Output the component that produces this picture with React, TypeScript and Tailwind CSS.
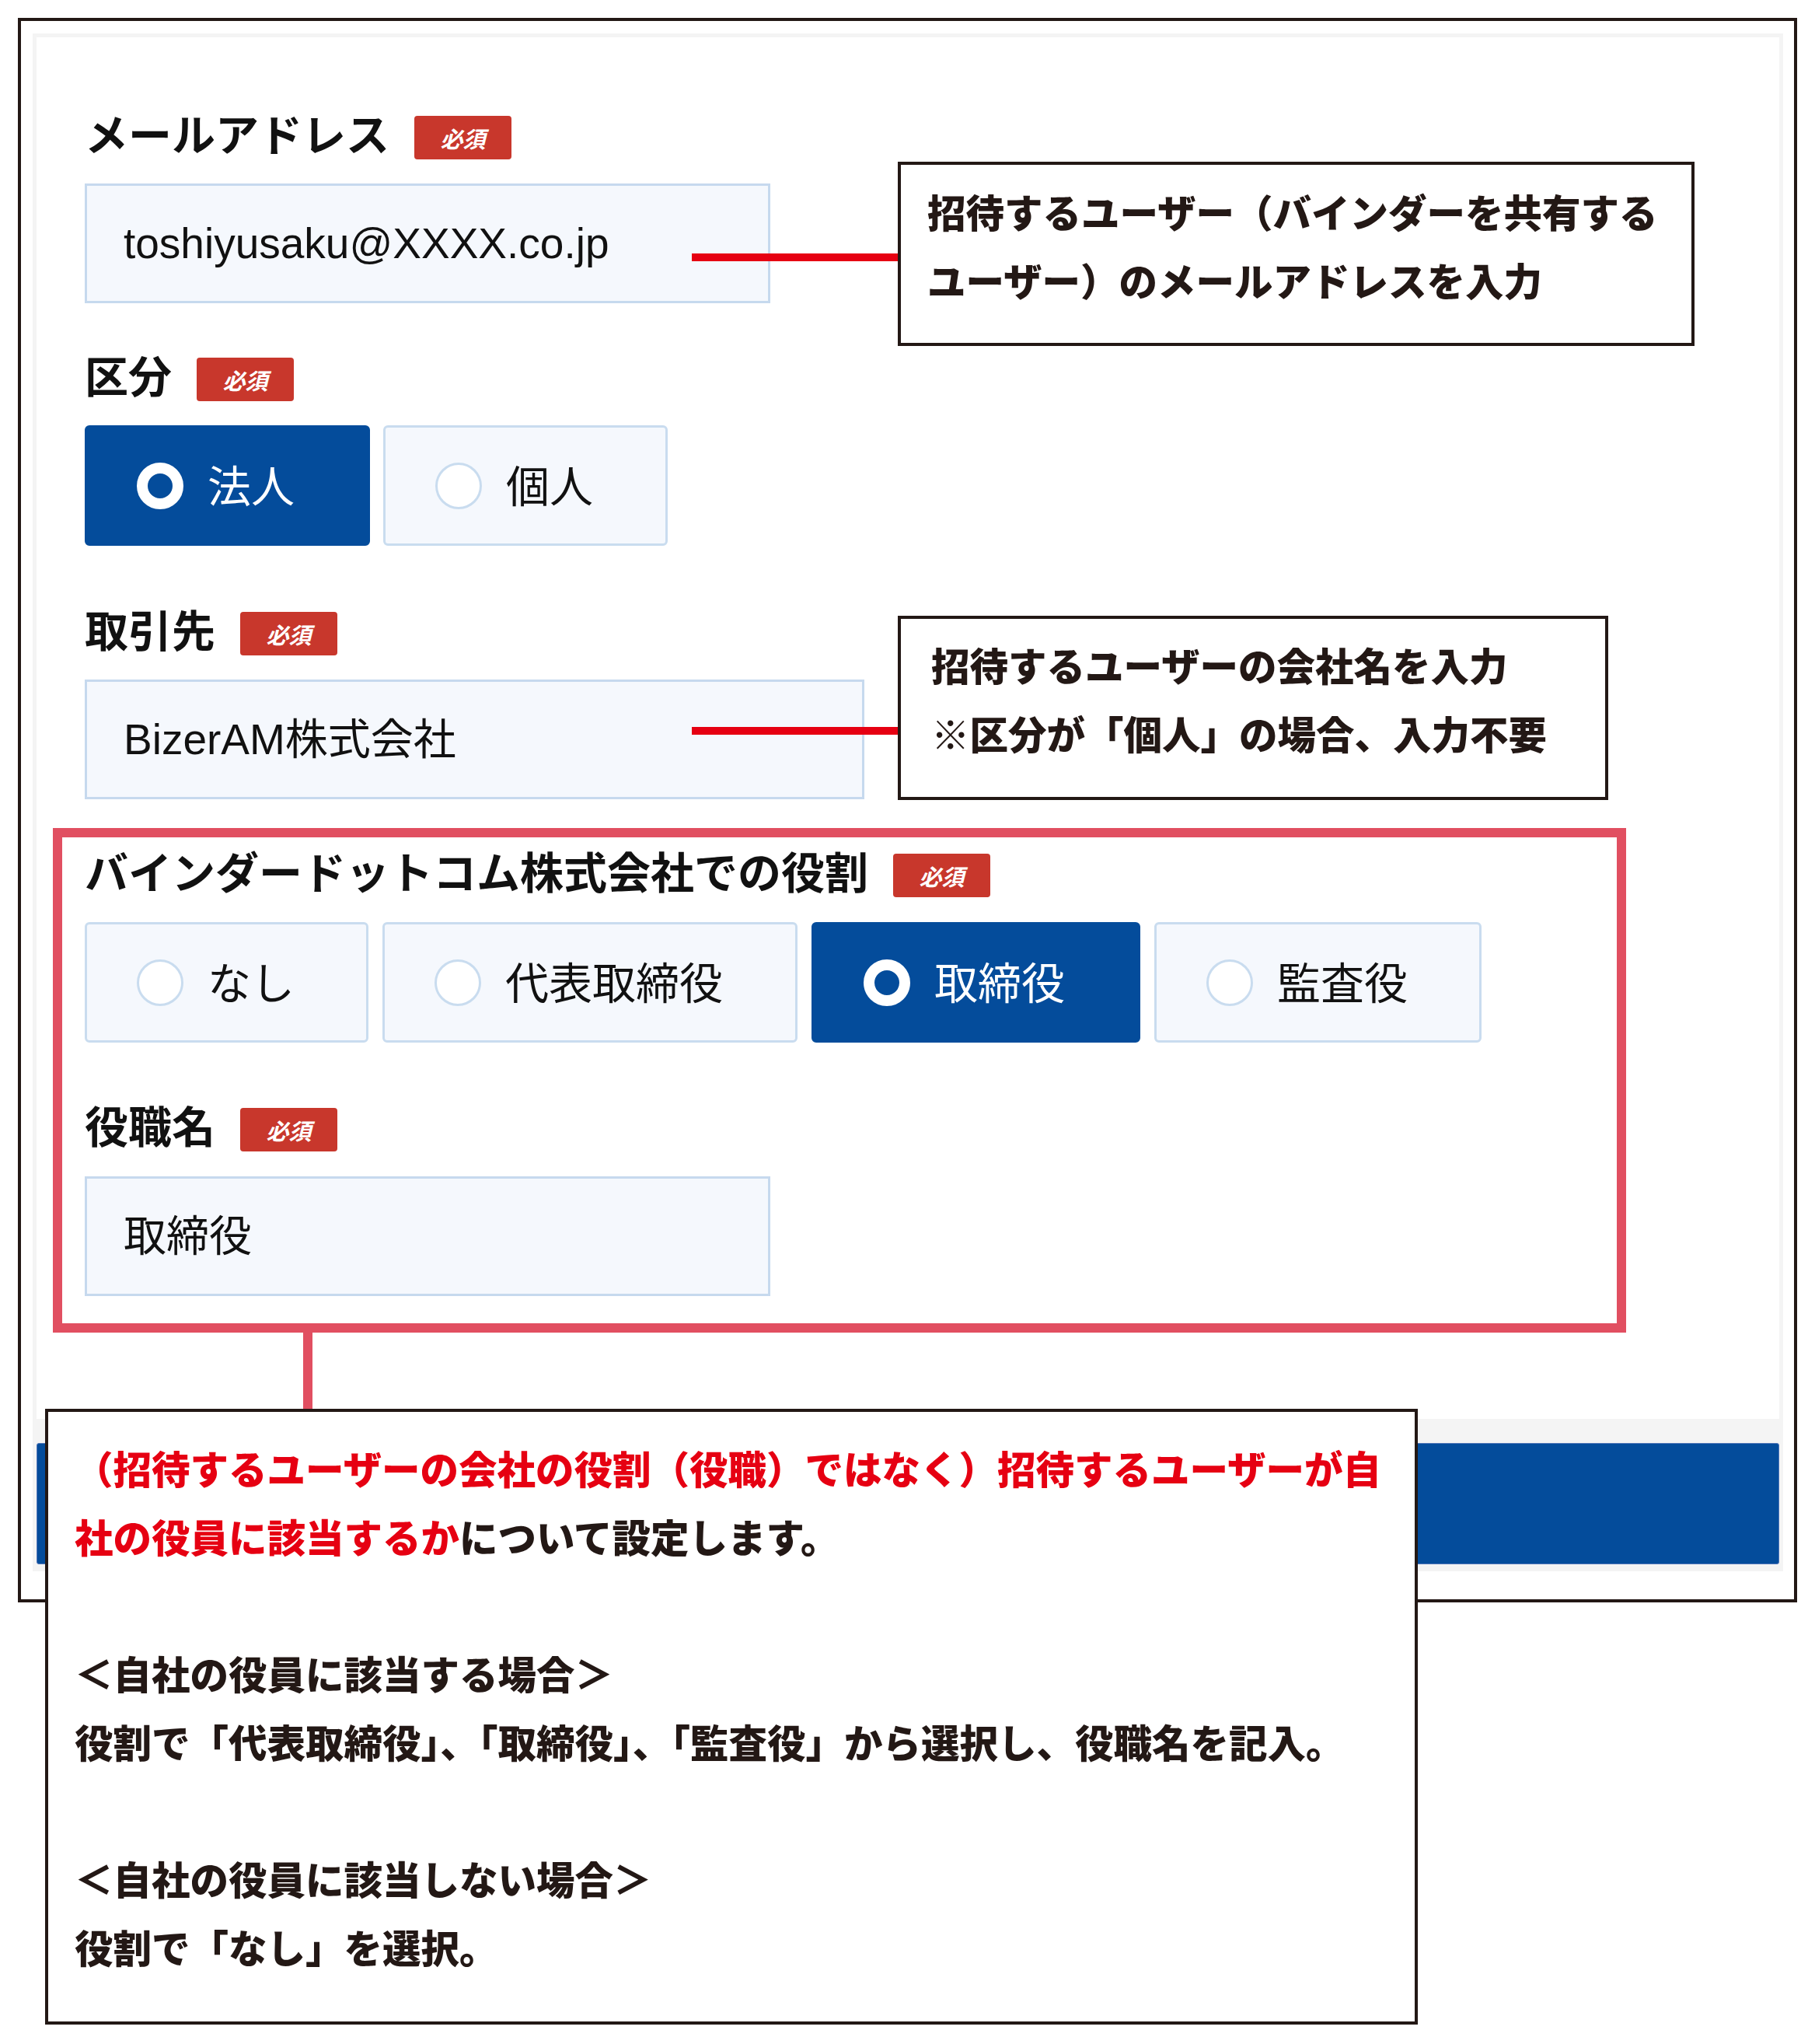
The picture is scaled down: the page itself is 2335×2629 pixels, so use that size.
import React from "react";

const jp = "font-['Noto_Sans_CJK_JP',sans-serif]";
const field = "font-['Liberation_Sans','Noto_Sans_CJK_JP',sans-serif]";

const Badge = () => (
  <span className="flex h-[56px] w-[125px] items-center justify-center rounded-[4px] bg-[#c8372c] text-[29px] font-bold italic leading-none text-white">
    必須
  </span>
);

const FieldLabel = ({ text, className = "" }: { text: string; className?: string }) => (
  <div className={`flex h-[56px] items-center gap-[32px] ${className}`}>
    <span className="relative -top-[7px] text-[56px] font-bold leading-none text-[#111]">{text}</span>
    <Badge />
  </div>
);

const TextBox = ({ value, width, className = "" }: { value: string; width: string; className?: string }) => (
  <div
    className={`flex h-[154px] items-center border-[3px] border-[#c6d9ee] bg-[#f5f8fd] pl-[47px] text-[55px] leading-none text-[#111] ${field} ${width} ${className}`}
  >
    {value}
  </div>
);

const RadioBox = ({ label, checked, width }: { label: string; checked?: boolean; width: string }) => (
  <div
    className={`flex h-[155px] items-center gap-[31px] rounded-[6px] border-[3px] pl-[64px] ${width} ${
      checked ? "border-[#044c9b] bg-[#044c9b] text-white" : "border-[#c9dcef] bg-[#f5f8fd] text-[#111]"
    }`}
  >
    {checked ? (
      <span className="h-[60px] w-[60px] shrink-0 rounded-full border-[14px] border-white bg-[#044c9b]" />
    ) : (
      <span className="h-[60px] w-[60px] shrink-0 rounded-full border-[3px] border-[#c9dcef] bg-white" />
    )}
    <span className="relative -top-[3px] text-[56px] leading-none">{label}</span>
  </div>
);

export default function App() {
  return (
    <div className={`relative h-[2629px] w-[2335px] bg-white px-[23px] pt-[23px] ${jp}`}>
      {/* outer frame */}
      <div className="h-[2038px] border-4 border-[#231815] bg-white pl-[15px] pr-[14px] pt-[16px]">
        {/* screenshot of the form */}
        <div className="bg-[#f4f4f4] px-[5px] pt-[5px] pb-[9px]">
          <div className="bg-white pl-[62px] pt-[101px] pb-[111px]">
            <FieldLabel text="メールアドレス" />
            <TextBox value="toshiyusaku@XXXX.co.jp" width="w-[882px]" className="mt-[31px]" />

            <FieldLabel text="区分" className="mt-[70px]" />
            <div className="mt-[31px] flex gap-[17px]">
              <RadioBox label="法人" checked width="w-[367px]" />
              <RadioBox label="個人" width="w-[366px]" />
            </div>

            <FieldLabel text="取引先" className="mt-[85px]" />
            <TextBox value="BizerAM株式会社" width="w-[1003px]" className="mt-[31px]" />

            {/* highlighted section */}
            <div className="-ml-[41px] mt-[37px] w-[2024px] border-[12px] border-[#e14f61] pl-[29px] pt-[21px] pb-[35px]">
              <FieldLabel text="バインダードットコム株式会社での役割" />
              <div className="mt-[32px] flex gap-[18px]">
                <RadioBox label="なし" width="w-[365px]" />
                <RadioBox label="代表取締役" width="w-[534px]" />
                <RadioBox label="取締役" checked width="w-[423px]" />
                <RadioBox label="監査役" width="w-[421px]" />
              </div>
              <FieldLabel text="役職名" className="mt-[84px]" />
              <TextBox value="取締役" width="w-[882px]" className="mt-[32px]" />
            </div>
          </div>
          <div className="mt-[31px] h-[156px] rounded-[3px] border border-[#4f74b8] bg-[#044c9b]" />
        </div>
      </div>

      {/* annotations */}
      <div className="absolute left-[890px] top-[326px] h-[10px] w-[267px] bg-[#e60012]" />
      <div className="absolute left-[1155px] top-[208px] h-[237px] w-[1025px] border-4 border-[#231815] bg-white pl-[34px] pt-[16px] text-[49.5px] font-black leading-[88px] text-[#231815]">
        招待するユーザー（バインダーを共有する
        <br />
        ユーザー）のメールアドレスを入力
      </div>

      <div className="absolute left-[890px] top-[935px] h-[10px] w-[267px] bg-[#e60012]" />
      <div className="absolute left-[1155px] top-[792px] h-[237px] w-[914px] border-4 border-[#231815] bg-white pl-[39px] pt-[15px] text-[49.5px] font-black leading-[88px] text-[#231815]">
        招待するユーザーの会社名を入力
        <br />
        ※区分が「個人」の場合、入力不要
      </div>

      <div className="absolute left-[390px] top-[1714px] h-[100px] w-[12px] bg-[#e14f61]" />
      <div className="absolute left-[58px] top-[1812px] h-[792px] w-[1766px] border-4 border-[#231815] bg-white pl-[34px] pt-[28px] text-[49.5px] font-black leading-[88px] text-[#231815]">
        <span className="text-[#e60012]">（招待するユーザーの会社の役割（役職）ではなく）招待するユーザーが自</span>
        <br />
        <span className="text-[#e60012]">社の役員に該当するか</span>について設定します。
        <br />
        <br />
        ＜自社の役員に該当する場合＞
        <br />
        役割で「代表取締役」、「取締役」、「監査役」から選択し、役職名を記入。
        <br />
        <br />
        ＜自社の役員に該当しない場合＞
        <br />
        役割で「なし」を選択。
      </div>
    </div>
  );
}
